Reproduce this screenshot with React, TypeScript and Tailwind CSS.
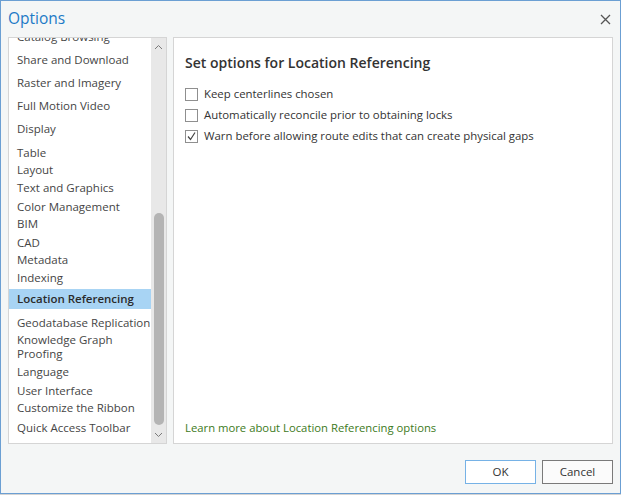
import React from "react";

const items: { label: string; cls: string; active?: boolean }[] = [
  { label: "Catalog Browsing", cls: "mt-[-8px]" },
  { label: "Share and Download", cls: "mt-[9px]" },
  { label: "Raster and Imagery", cls: "mt-[9px]" },
  { label: "Full Motion Video", cls: "mt-[9px]" },
  { label: "Display", cls: "mt-[9px]" },
  { label: "Table", cls: "mt-[10px]" },
  { label: "Layout", cls: "mt-[3px]" },
  { label: "Text and Graphics", cls: "mt-[4px]" },
  { label: "Color Management", cls: "mt-[5px]" },
  { label: "BIM", cls: "mt-[3px]" },
  { label: "CAD", cls: "mt-[5px]" },
  { label: "Metadata", cls: "mt-[3px]" },
  { label: "Indexing", cls: "mt-[4px]" },
  { label: "Location Referencing", cls: "mt-[4px]", active: true },
  { label: "Geodatabase Replication", cls: "mt-[7px]" },
  { label: "Knowledge Graph", cls: "mt-[3px]" },
  { label: "Proofing", cls: "mt-[0px]" },
  { label: "Language", cls: "mt-[4px]" },
  { label: "User Interface", cls: "mt-[5px]" },
  { label: "Customize the Ribbon", cls: "mt-[3px]" },
  { label: "Quick Access Toolbar", cls: "mt-[6px]" },
];

function Chevron({ up }: { up?: boolean }) {
  return (
    <svg width="9" height="6" viewBox="0 0 9 6">
      <polyline
        points={up ? "1,5 4.5,1.5 8,5" : "1,1 4.5,4.5 8,1"}
        fill="none"
        stroke="#7a7a7a"
        strokeWidth="1"
      />
    </svg>
  );
}

function Checkbox({ checked, label }: { checked?: boolean; label: string }) {
  return (
    <div className="flex items-center h-[14px]">
      <div className="w-[13px] h-[13px] border border-[#8f8f8f] bg-white flex items-center justify-center shrink-0">
        {checked && (
          <svg width="11" height="11" viewBox="0 0 11 11">
            <polyline points="2,5.5 4.5,8.5 9,1.5" fill="none" stroke="#444" strokeWidth="1.2" />
          </svg>
        )}
      </div>
      <span className="ml-[6px] text-[11.4px] text-[#333]">{label}</span>
    </div>
  );
}

export default function App() {
  return (
    <div
      className="w-[621px] h-[495px] bg-[#d4d4d4] overflow-hidden"
      style={{ fontFamily: '"Open Sans", "Noto Sans", sans-serif' }}
    >
      <div className="w-[621px] h-[494px] border border-[#6b9fd3] bg-[#f4f6f6] flex flex-col">
        <div className="h-[36px] flex items-center justify-between pl-[7px] pr-[8px]">
          <span className="text-[15.5px] text-[#1d7ac6] leading-none">Options</span>
          <svg width="11" height="11" viewBox="0 0 11 11" className="mr-[1px]">
            <path d="M1 1 L10 10 M10 1 L1 10" stroke="#555" strokeWidth="1.3" />
          </svg>
        </div>
        <div className="flex px-[7px] gap-[6px]">
          <div className="w-[159px] h-[407px] border border-[#d5d5d5] bg-white flex">
            <div className="flex-1 overflow-hidden flex flex-col">
              {items.map((it) =>
                it.active ? (
                  <div
                    key={it.label}
                    className={`${it.cls} h-[20px] bg-[#a8d4f4] flex items-center pl-[8px] text-[11.5px] font-semibold text-[#2b2b2b] leading-[14px] whitespace-nowrap ml-[-1px]`}
                  >
                    <span className="ml-[1px]">{it.label}</span>
                  </div>
                ) : (
                  <div
                    key={it.label}
                    className={`${it.cls} h-[14px] pl-[8px] text-[11.5px] text-[#454545] leading-[14px] whitespace-nowrap`}
                  >
                    {it.label}
                  </div>
                )
              )}
            </div>
            <div className="w-[15px] bg-[#e8e8e8] flex flex-col">
              <div className="h-[17px] flex items-center justify-center">
                <Chevron up />
              </div>
              <div className="flex-1 flex flex-col items-center">
                <div className="mt-[158px] w-[10px] h-[212px] rounded-full bg-[#b4b4b4]" />
              </div>
              <div className="h-[17px] flex items-center justify-center">
                <Chevron />
              </div>
            </div>
          </div>
          <div className="w-[440px] h-[407px] border border-[#d5d5d5] bg-white flex flex-col pl-[11px]">
            <div className="mt-[15px] text-[14px] font-semibold text-[#333] leading-[20px]">
              Set options for Location Referencing
            </div>
            <div className="mt-[14px] flex flex-col gap-[7px]">
              <Checkbox label="Keep centerlines chosen" />
              <Checkbox label="Automatically reconcile prior to obtaining locks" />
              <Checkbox checked label="Warn before allowing route edits that can create physical gaps" />
            </div>
            <div className="mt-auto mb-[8px] text-[11.3px] text-[#3d7a22] leading-[14px]">
              Learn more about Location Referencing options
            </div>
          </div>
        </div>
        <div className="flex justify-end gap-[6px] px-[7px] mt-[16px]">
          <button className="w-[71px] h-[24px] border border-[#76b2e6] bg-white text-[11.5px] text-[#333]">
            OK
          </button>
          <button className="w-[71px] h-[24px] border border-[#7a7a7a] bg-[#fbfbfb] text-[11.5px] text-[#333]">
            Cancel
          </button>
        </div>
      </div>
    </div>
  );
}
